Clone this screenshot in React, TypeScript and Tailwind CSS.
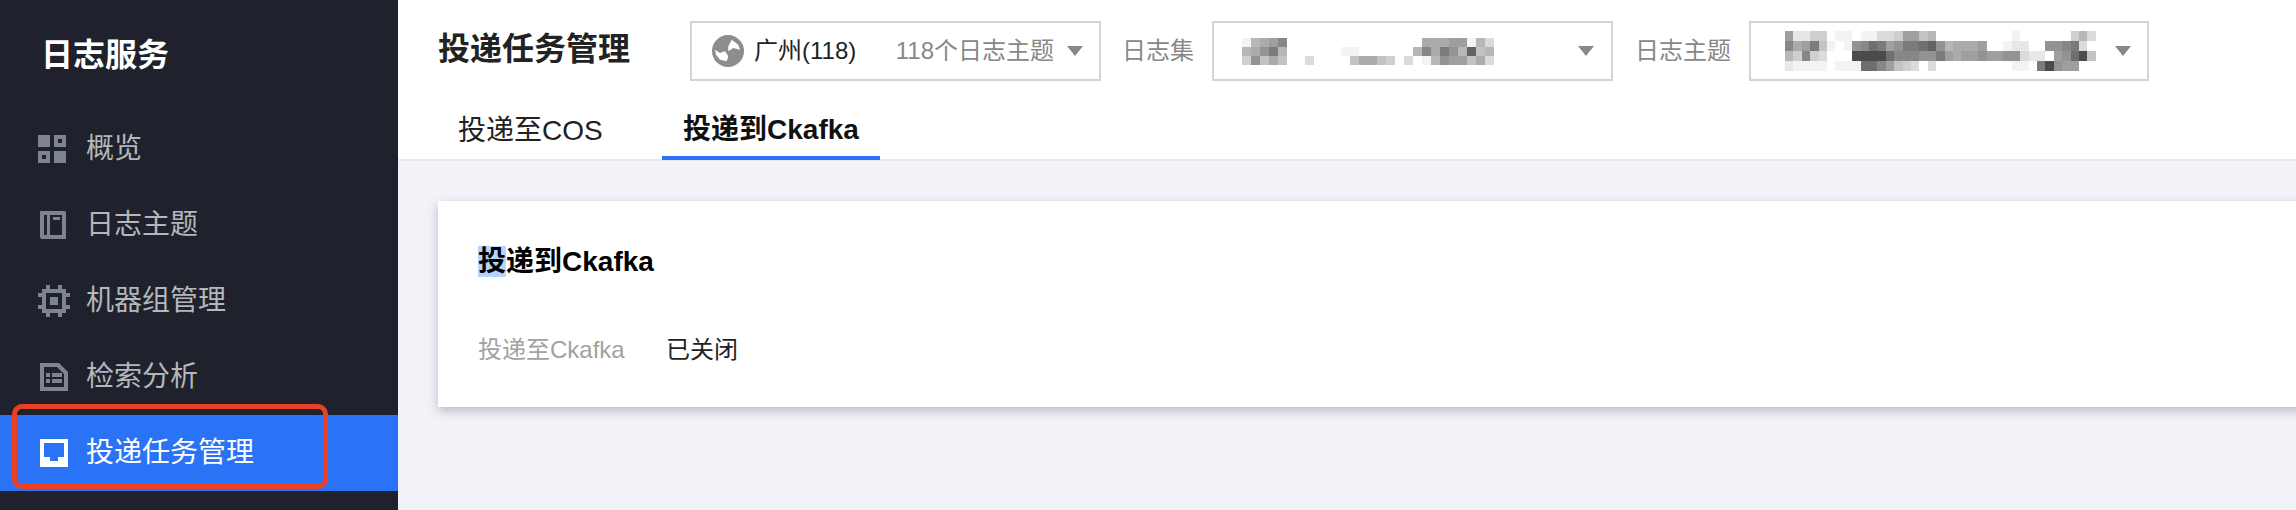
const font = "font-['Liberation_Sans','Noto_Sans_CJK_SC',sans-serif]";

// hex digit = grey level of one mosaic block, 'f' is white
function Mosaic({ rows, cell, rowHeight }: { rows: string[]; cell: number; rowHeight: number }) {
  const width = Math.max(...rows.map(r => r.length)) * cell;
  return (
    <svg width={width} height={rows.length * rowHeight} shapeRendering="crispEdges">
      {rows.map((row, y) =>
        row.split('').map((c, x) => {
          const level = parseInt(c, 16);
          if (level === 15) return null;
          const v = 255 - (15 - level) * 12;
          return <rect key={`${x}-${y}`} x={x * cell} y={y * rowHeight} width={cell} height={rowHeight} fill={`rgb(${v},${v},${v})`} />;
        })
      )}
    </svg>
  );
}

const setRows = [
  'e9875fffffffffffffff88877e9c',
  '98649ffffffeeffffff9584692a9',
  'b6a8affcffffa88abfcfe9677a8c',
];

const topicRows = [
  '7ddbbfeefeeccb77a9fffffffffeffffffb9c',
  '5874aefe6534764432698887ffeddff6654cf',
  '9b5bcfff00003555664787767766cddf7630a',
  'deeeefeee3357abcfcfffffffffeef40677ff',
];

function Caret() {
  return <span className="block h-0 w-0 shrink-0 border-x-[8px] border-t-[10px] border-x-transparent border-t-[#888]" />;
}

function NavIcon({ name }: { name: string }) {
  const fill = name === 'task' ? '#fff' : '#7d858f';
  const bg = name === 'task' ? '#2a72f6' : '#1f212c';
  return (
    <svg width="32" height="32" viewBox="0 0 32 32" className="shrink-0">
      {name === 'overview' && (
        <path fill={fill} fillRule="evenodd" d="M0 2h12v12H0zM16 2h12v12H16zM20 6v4h4V6zM0 18h12v12H0zM4 22v4h4v-4zM16 18h12v12H16z" />
      )}
      {name === 'topic' && (
        <path fill={fill} fillRule="evenodd" d="M2 2h24a2 2 0 0 1 2 2v26H4a2 2 0 0 1-2-2V2zM6 6v20h3V6zM12 6v20h12V6zM15 8h7v3h-7z" />
      )}
      {name === 'machine' && (
        <>
          <path fill={fill} d="M8 0h4v4h8V0h4v4h4v4h4v4h-4v8h4v4h-4v4h-4v4h-4v-4h-8v4H8v-4H4v-4H0v-4h4v-8H0V8h4V4h4z" />
          <rect x="8" y="8" width="16" height="16" fill={bg} />
          <rect x="12" y="12" width="8" height="8" fill={fill} />
        </>
      )}
      {name === 'search' && (
        <>
          <path fill={fill} d="M2 2h19l9 9v19H2z" />
          <path fill={bg} d="M6 6h13l7 7v13H6z" />
          <path fill={fill} d="M8 12h4v4H8zM14 12h10v4H14zM8 18h4v4H8zM14 18h10v4H14z" />
        </>
      )}
      {name === 'task' && (
        <>
          <rect x="2" y="2" width="28" height="28" fill={fill} />
          <path fill={bg} d="M6 6h20v14h-6v4h-8v-4H6z" />
        </>
      )}
    </svg>
  );
}

const navItems = [
  { name: 'overview', label: '概览' },
  { name: 'topic', label: '日志主题' },
  { name: 'machine', label: '机器组管理' },
  { name: 'search', label: '检索分析' },
];

export default function App() {
  return (
    <div className={`flex h-[510px] w-[2296px] overflow-hidden bg-[#f2f3f8] ${font}`}>
      <aside className="flex w-[398px] shrink-0 flex-col bg-[#1f212c]">
        <div className="pl-[41px] pt-[35px] text-[32px] font-bold leading-[40px] text-white">日志服务</div>
        <nav className="mt-[36px] flex flex-col">
          {navItems.map(item => (
            <div key={item.name} className="flex h-[76px] items-center gap-[16px] pl-[38px] text-[28px] text-[#b4b8bc]">
              <NavIcon name={item.name} />
              <span className="leading-[32px]">{item.label}</span>
            </div>
          ))}
          <div className="relative flex h-[76px] items-center gap-[16px] bg-[#2a72f6] pl-[38px] text-[28px] text-white">
            <NavIcon name="task" />
            <span className="leading-[32px]">投递任务管理</span>
            <div className="absolute left-[12px] top-[-11px] h-[85px] w-[316px] rounded-[10px] border-[5px] border-[#ea4024]" />
          </div>
        </nav>
      </aside>

      <main className="flex min-w-0 flex-1 flex-col">
        <header className="h-[161px] border-b-[2px] border-[#e8e9ee] bg-white">
          <div className="flex h-[103px] items-start pt-[21px]">
            <h1 className="ml-[40px] mt-[6px] w-[252px] text-[32px] font-bold leading-[44px] text-[#222]">投递任务管理</h1>
            <div className="flex h-[60px] w-[411px] items-center border-2 border-[#d0d4de] pl-[20px] pr-[16px] text-[24px]">
              <svg width="32" height="32" viewBox="0 0 32 32" className="shrink-0">
                <circle cx="16" cy="16" r="16" fill="#8d8d8d" />
                <path fill="#fff" d="M16.3 11.3L19.7 4.7 26.3 9.7 28 14.7 21.3 13 16.3 16.3zM3 14.7L8 18 13 16.3 16.3 21.3 14.7 26.3 8 24.7 4 19.7z" />
              </svg>
              <span className="ml-[10px] text-[#222]">广州(118)</span>
              <span className="ml-auto text-[#888]">118个日志主题</span>
              <span className="ml-[13px]"><Caret /></span>
            </div>
            <span className="ml-[21px] mt-[14px] text-[24px] leading-[32px] text-[#888]">日志集</span>
            <div className="ml-[18px] flex h-[60px] w-[401px] items-center justify-between border-2 border-[#d0d4de] pl-[28px] pr-[17px]">
              <Mosaic rows={setRows} cell={9} rowHeight={9} />
              <Caret />
            </div>
            <span className="ml-[22px] mt-[14px] text-[24px] leading-[32px] text-[#888]">日志主题</span>
            <div className="ml-[18px] flex h-[60px] w-[400px] items-center justify-between border-2 border-[#d0d4de] pl-[34px] pr-[16px]">
              <Mosaic rows={topicRows} cell={8.4} rowHeight={10} />
              <Caret />
            </div>
          </div>
          <div className="ml-[60px] flex h-[56px]">
            <div className="flex w-[204px] items-center text-[28px] text-[#222]">投递至COS</div>
            <div className="flex h-[57px] w-[218px] items-center justify-center border-b-[4px] border-[#2a72f6] text-[28px] font-bold text-[#111]">
              投递到Ckafka
            </div>
          </div>
        </header>

        <section className="px-[40px] pt-[40px]">
          <div className="h-[206px] w-[2000px] bg-white pl-[40px] pt-[40px] shadow-[0_4px_10px_rgba(54,58,80,0.3)]">
            <h2 className="text-[28px] font-bold leading-[42px] text-black">
              <span className="bg-[#b6d5fc]">投</span>递到Ckafka
            </h2>
            <div className="mt-[51px] flex text-[24px] leading-[32px]">
              <span className="w-[188px] text-[#a2a2a2]">投递至Ckafka</span>
              <span className="text-[#222]">已关闭</span>
            </div>
          </div>
        </section>
      </main>
    </div>
  );
}
